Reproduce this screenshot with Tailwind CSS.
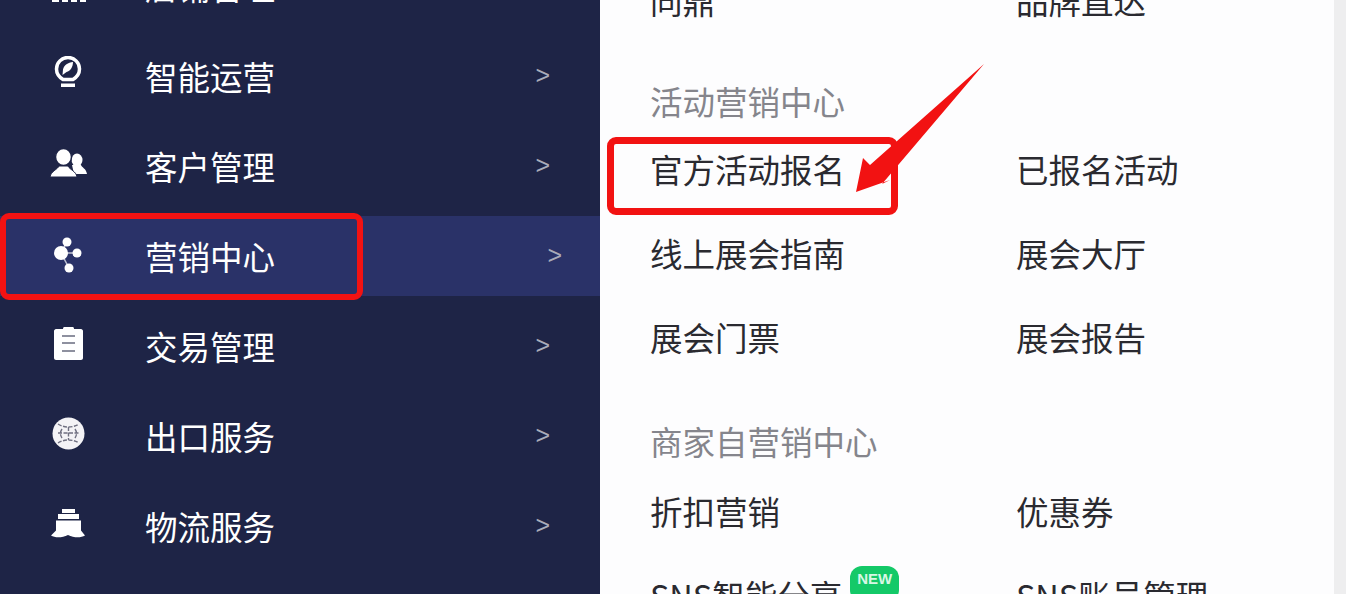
<!DOCTYPE html>
<html lang="zh-CN">
<head>
    <meta charset="UTF-8">
    <script src="https://cdn.jsdelivr.net/npm/@tailwindcss/browser@4"></script>
    <title>营销中心</title>
</head>
<body class="bg-[#fdfdfe] font-['Noto_Sans_CJK_SC','Liberation_Sans',sans-serif]">
    <div class="relative flex h-[594px] w-[1346px] overflow-hidden">
        <!-- sidebar -->
        <aside class="w-[600px] shrink-0 bg-[#1e2446] text-[32.5px] text-white">
            <ul class="-mt-[54px] flex flex-col gap-[10px]">
                <li class="relative flex h-[80px] items-center pl-[145px] pr-[50px]">
                    <svg class="absolute left-[52px] top-[52px] h-[4px] w-[34px]" viewBox="0 0 34 4" fill="white">
                        <path d="M0 0h7v4H0zM10 0h6v4h-6zM19 0h6v4h-6zM28 0h6v4h-6z"/>
                    </svg>
                    <span class="flex-1">店铺管理</span>
                    <span class="font-['Liberation_Sans'] text-[25px] text-[#a9abb9]">&gt;</span>
                </li>
                <li class="relative flex h-[80px] items-center pl-[145px] pr-[50px]">
                    <svg class="absolute left-[54px] top-[20px] h-[33px] w-[28px]" viewBox="0 0 28 33" fill="none">
                        <path d="M9 23.500C5 21 2.500 17.500 2.500 13a11.500 11.500 0 0 1 23 0c0 4.500-2.500 8-6.500 10.500z" stroke="white" stroke-width="3.500" stroke-linejoin="round"/>
                        <path d="M19 6c-5 .5-9 3-10 7.500L8.500 19l4-3c4-1 6.500-5 6.500-10z" fill="white"/>
                        <path d="M7 27.500h14V31H7z" fill="white"/>
                    </svg>
                    <span class="flex-1">智能运营</span>
                    <span class="font-['Liberation_Sans'] text-[25px] text-[#a9abb9]">&gt;</span>
                </li>
                <li class="relative flex h-[80px] items-center pl-[145px] pr-[50px]">
                    <svg class="absolute left-[50px] top-[23px] h-[28px] w-[37px]" viewBox="0 0 37 28" fill="white">
                        <ellipse cx="27" cy="11" rx="5.500" ry="6.500"/>
                        <path d="M22 16h9c1 3 5 3 6 9H24z"/>
                        <ellipse cx="13.500" cy="8" rx="8" ry="8.500" stroke="#1e2446" stroke-width="1.500"/>
                        <path d="M0 28c1-6 7-7 9-11h9c2 4 8 5 9 11z" stroke="#1e2446" stroke-width="1"/>
                    </svg>
                    <span class="flex-1">客户管理</span>
                    <span class="font-['Liberation_Sans'] text-[25px] text-[#a9abb9]">&gt;</span>
                </li>
                <li class="relative flex h-[80px] items-center bg-[#2a3268] pl-[145px] pr-[38px]">
                    <svg class="absolute left-[52px] top-[19px] h-[40px] w-[32px]" viewBox="0 0 32 40" fill="white">
                        <path d="M15 7 9 18h16M9 18l8 15" stroke="white" stroke-width="1.500" fill="none" opacity=".7"/>
                        <circle cx="15" cy="7" r="4.500"/>
                        <circle cx="9" cy="18" r="7"/>
                        <circle cx="25" cy="18" r="4.500"/>
                        <circle cx="17" cy="33" r="4.500"/>
                    </svg>
                    <span class="flex-1">营销中心</span>
                    <span class="font-['Liberation_Sans'] text-[25px] text-[#a9abb9]">&gt;</span>
                </li>
                <li class="relative flex h-[80px] items-center pl-[145px] pr-[50px]">
                    <svg class="absolute left-[54px] top-[21px] h-[33px] w-[29px]" viewBox="0 0 29 33" fill="white">
                        <path d="M2 2h7c0-2 1-2 2-2h7c1 0 2 0 2 2h7c1 0 2 1 2 2v27c0 1-1 2-2 2H2c-1 0-2-1-2-2V4c0-1 1-2 2-2z"/>
                        <path d="M8 9h13M8 16h13M8 24h13" stroke="#6a6c80" stroke-width="1.300"/>
                    </svg>
                    <span class="flex-1">交易管理</span>
                    <span class="font-['Liberation_Sans'] text-[25px] text-[#a9abb9]">&gt;</span>
                </li>
                <li class="relative flex h-[80px] items-center pl-[145px] pr-[50px]">
                    <svg class="absolute left-[52px] top-[21px] h-[33px] w-[33px]" viewBox="0 0 33 33">
                        <circle cx="16.500" cy="16.500" r="16" fill="#f4f3f6"/>
                        <path d="M6 7c6 4 15 4 21 0M6 26c6-4 15-4 21 0M6 16h21M16.500 10v13M10 12c-2 3-2 6 0 9M23 12c2 3 2 6 0 9" stroke="#6f6f80" stroke-width="1.400" stroke-dasharray="4 1.500" fill="none"/>
                    </svg>
                    <span class="flex-1">出口服务</span>
                    <span class="font-['Liberation_Sans'] text-[25px] text-[#a9abb9]">&gt;</span>
                </li>
                <li class="relative flex h-[80px] items-center pl-[145px] pr-[50px]">
                    <svg class="absolute left-[51px] top-[23px] h-[30px] w-[34px]" viewBox="0 0 34 30" fill="white">
                        <path d="M11 0h13v4H11zM7 5h21v5H7z"/>
                        <path d="M5 11.500h25v10l4 5c-4 2.500-11 2.500-17-.500-6 3-13 3-17 .5l5-5z"/>
                    </svg>
                    <span class="flex-1">物流服务</span>
                    <span class="font-['Liberation_Sans'] text-[25px] text-[#a9abb9]">&gt;</span>
                </li>
            </ul>
        </aside>

        <!-- menu panel -->
        <main class="flex-1 pl-[50px] text-[32.5px] leading-[48px] text-[#2a2a30]">
            <div class="-mt-[24px] grid grid-cols-[366px_1fr]">
                <span>同鼎</span>
                <span>品牌直达</span>
            </div>
            <h3 class="mt-[53px] text-[#85858c]">活动营销中心</h3>
            <div class="mt-[20px] grid grid-cols-[366px_1fr] gap-y-[36px]">
                <span>官方活动报名</span>
                <span>已报名活动</span>
                <span>线上展会指南</span>
                <span>展会大厅</span>
                <span>展会门票</span>
                <span>展会报告</span>
            </div>
            <h3 class="mt-[56px] text-[#85858c]">商家自营销中心</h3>
            <div class="mt-[22px] grid grid-cols-[366px_1fr] gap-y-[36px]">
                <span>折扣营销</span>
                <span>优惠券</span>
                <span class="relative w-fit">SNS智能分享
                    <b class="absolute -right-[57px] -top-[5px] h-[36px] rounded-[12px] bg-[#14c968] px-[7px] pt-[2px] font-['Liberation_Sans'] text-[15px] leading-[22px] font-bold text-[#d8f7e5]">NEW</b>
                </span>
                <span>SNS账号管理</span>
            </div>
        </main>

        <div class="w-[12px] shrink-0 bg-[#eeeeef]"></div>

        <!-- red marks over the screenshot -->
        <div class="absolute left-0 top-[213px] h-[87px] w-[363px] rounded-[9px] border-[6px] border-[#f21212]"></div>
        <div class="absolute left-[607px] top-[137px] h-[78px] w-[291px] rounded-[9px] border-[7px] border-[#f21212]"></div>
        <svg class="absolute left-[850px] top-[60px] h-[135px] w-[140px]" viewBox="0 0 140 135" fill="#f21212">
            <path d="M134 4 32 124l8-4-34 12 7-34 7 7z"/>
        </svg>
    </div>
</body>
</html>
